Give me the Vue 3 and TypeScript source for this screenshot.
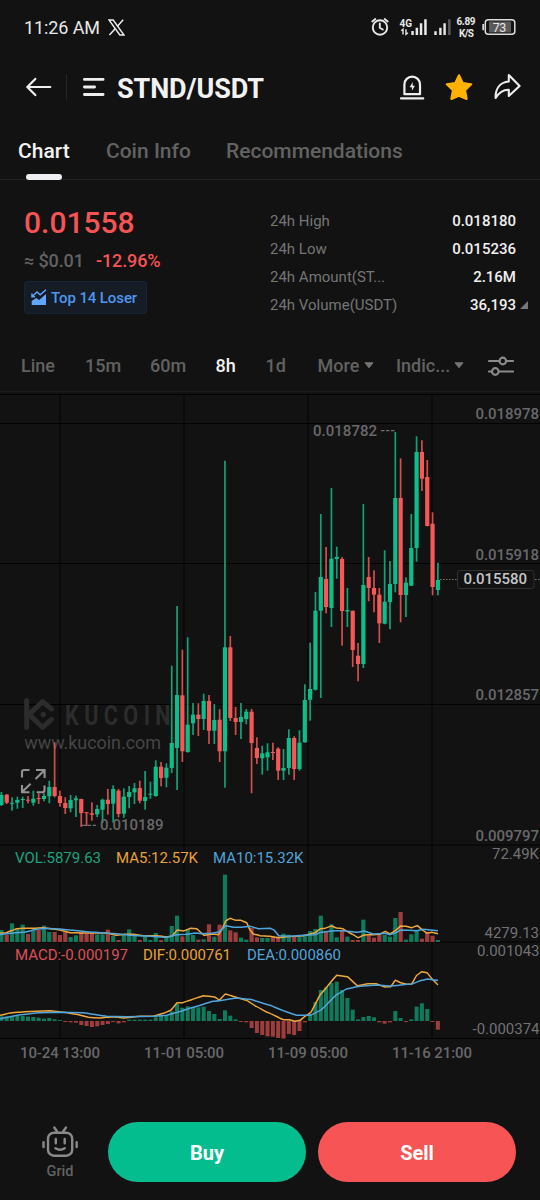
<script setup lang="ts">
type Candle = [high: number, top: number, bottom: number, low: number, up: 0 | 1]

const step = 5.323
const xAt = (i: number): number => 1.4 + i * step

const candles: Candle[] = [
  [792, 795, 805, 806, 1], [794, 794.7, 802.7, 804, 0], [797.3, 802.7, 803.7, 810.7, 1], [796.7, 800, 802.7, 808.7, 1],
  [796.7, 799, 800, 808, 1], [796, 799.7, 800.7, 803.3, 0], [790.7, 798.7, 802.7, 805.7, 1], [793.3, 798, 799, 804, 0],
  [793.3, 796, 799, 801.3, 1], [780.7, 787, 796.3, 803.3, 1], [742.3, 787, 796, 797.3, 0], [790.7, 796, 803, 806.7, 0],
  [797.3, 803, 808, 814, 0], [795, 800, 808.3, 812.3, 1], [795.7, 798.3, 800.3, 817, 1], [798.7, 799, 813, 827, 0],
  [812, 812.3, 813.3, 826, 0], [802.3, 813.3, 814.7, 820.7, 0], [805, 809, 814.3, 817, 1], [798.7, 799.7, 809.7, 823, 1],
  [789, 799.7, 804, 814.7, 0], [785.3, 789, 803.7, 822.7, 1], [789, 790.7, 814, 817.3, 0], [788.3, 796.7, 813.7, 817.7, 1],
  [786, 792, 797, 808.3, 1], [783, 788.3, 792.3, 804, 1], [780.7, 788, 800.7, 803.3, 0], [771, 797, 801, 809.7, 1],
  [781.7, 793.7, 794.7, 798.7, 1], [760.3, 766.7, 796, 796.7, 1], [762, 766.7, 778, 786.3, 0], [763.3, 767.7, 777.7, 787.3, 1],
  [665.7, 743, 768, 773, 1], [606, 695, 748, 790, 1], [649.7, 695.3, 751.3, 762, 0], [637.3, 724.7, 752, 752.7, 1],
  [703, 714.7, 723.3, 735, 1], [703.3, 714.7, 719, 736, 0], [693.7, 701, 719, 730, 1], [695, 701, 730.7, 744, 0],
  [704, 720, 730.7, 744, 1], [709.3, 719.7, 751.3, 762, 0], [460.7, 647.3, 751.3, 787.7, 1], [636, 647.3, 718, 721, 0],
  [707, 718, 722, 735, 0], [703, 717, 722, 739, 1], [709, 711.7, 719, 724.3, 1], [709, 711.7, 743, 793.3, 0],
  [737.3, 748, 758, 764, 0], [745.7, 753.3, 758.3, 774.7, 1], [743.3, 752.3, 757.3, 770.7, 1], [742.7, 752, 753, 760, 0],
  [747.3, 748.7, 770.7, 780, 0], [749, 768, 770.7, 780, 1], [729.3, 738, 768, 774.7, 1], [736.3, 738, 769, 780, 0],
  [730.3, 742.7, 769, 770.7, 1], [684.3, 700, 742.3, 742.7, 1], [642.7, 689, 699.7, 720.7, 1], [592, 610.7, 689.7, 690.5, 1],
  [514, 577, 610.7, 698, 1], [547, 579, 607, 613.3, 0], [488, 558.7, 608, 627, 1], [546.7, 556.9, 559, 578.7, 1],
  [557, 559, 611, 645.7, 0], [588, 610, 611.5, 627, 1], [610.7, 610.7, 650, 667, 0], [643, 655.7, 664, 681.3, 0],
  [504, 585, 664, 668, 1], [557, 577, 588, 601.3, 0], [570.3, 588, 594.7, 612.3, 0], [588, 594.7, 623.3, 643, 0],
  [550.3, 601.7, 623.7, 624.3, 1], [561, 584, 602, 629.3, 1], [432, 498, 584, 592.3, 1], [458.3, 498, 595, 622.3, 0],
  [577.3, 582.7, 595, 617, 1], [514, 548, 585.7, 586, 1], [436.3, 452, 548, 561.7, 1], [440.3, 452, 478.7, 491, 0],
  [460, 477, 526, 526.3, 0], [512.3, 523.7, 587, 595.3, 0], [562.7, 580, 590, 595.3, 1],
]

/* Volume bar heights, in thirds of a pixel */
const volumes: number[] = [
  36, 22, 56, 42, 52, 24, 35, 36, 49, 30, 30, 21, 30, 15, 20, 29, 26, 29, 23, 23, 37, 18, 6, 21, 38, 24, 6, 16, 6, 27, 6,
  15, 48, 79, 17, 37, 21, 7, 8, 53, 16, 52, 202, 35, 29, 13, 7, 42, 14, 12, 12, 15, 16, 25, 22, 17, 17, 20, 33, 39, 79,
  30, 53, 14, 33, 16, 6, 6, 67, 20, 13, 26, 21, 16, 72, 90, 7, 23, 36, 10, 30, 19, 6,
]

/* Histogram values, in thirds of a pixel around the zero line */
const histogram: number[] = [
  14, 14, 15, 15, 15, 13, 12, 10, 7, 9, 5, 3, -3, -4, -5, -12, -15, -18, -16, -12, -9, -3, -7, -4, 4, 4, 4, 4, 4, 11, 15,
  18, 29, 51, 40, 44, 42, 41, 43, 30, 21, 6, 32, 16, 5, -3, -4, -21, -36, -42, -46, -47, -51, -53, -39, -42, -30, -4, 21,
  57, 93, 101, 114, 118, 93, 69, 34, 5, 12, 15, 11, -4, -8, -4, 30, 9, -3, 5, 43, 53, 36, -3, -26,
]

type Point = [number, number]

function smooth(points: Point[]): string {
  let d = `M${points[0][0]} ${points[0][1]}`
  for (let i = 1; i < points.length; i++) {
    const [px, py] = points[i - 1]
    const [x, y] = points[i]
    const s = (x - px) * 0.2
    const r = (y - py) * 0.15
    d += ` C${px + s} ${py + r} ${x - s} ${y - r} ${x} ${y}`
  }
  return d
}

const scale = (left: Point[], right: Point[], y0: number): string =>
  smooth([
    ...left.map(([x, y]): Point => [x / 3, y0 + y / 3]),
    ...right.map(([x, y]): Point => [270 + x / 3, y0 + y / 3]),
  ])

const ma5 = scale(
  [[0, 279], [16, 279], [32, 273], [50, 266], [70, 265], [100, 265], [130, 263], [150, 266], [180, 270], [210, 278], [240, 279], [320, 279], [350, 286], [375, 283], [400, 283], [430, 287], [470, 287], [500, 291], [516, 288], [532, 270], [550, 273], [572, 265], [590, 266], [604, 279], [612, 286], [632, 282], [655, 284], [665, 270], [678, 242], [690, 235], [704, 240], [722, 241], [740, 248], [750, 270], [760, 282], [780, 287]],
  [[0, 289], [25, 293], [50, 290], [100, 287], [135, 278], [152, 266], [165, 265], [184, 258], [200, 264], [218, 266], [232, 275], [248, 283], [264, 293], [282, 285], [310, 284], [328, 283], [346, 274], [360, 282], [376, 272], [392, 258], [408, 259], [425, 263], [442, 257], [460, 272], [470, 279], [485, 277], [504, 281]],
  840,
)
const ma10 = scale(
  [[0, 284], [40, 279], [75, 276], [110, 268], [140, 265], [180, 267], [220, 271], [260, 275], [310, 279], [350, 281], [390, 286], [440, 288], [500, 292], [530, 284], [560, 283], [585, 279], [604, 281], [632, 280], [656, 276], [678, 257], [700, 262], [725, 262], [750, 259], [775, 266]],
  [[0, 265], [12, 270], [26, 287], [60, 289], [100, 286], [135, 284], [152, 277], [184, 273], [220, 272], [260, 277], [282, 273], [310, 282], [345, 280], [360, 284], [376, 279], [392, 270], [440, 272], [460, 268], [504, 272]],
  840,
)
const dif = scale(
  [[0, 226], [30, 219], [75, 215], [110, 214], [150, 212], [190, 217], [230, 223], [265, 232], [300, 234], [340, 230], [370, 234], [420, 229], [460, 228], [490, 220], [512, 211], [532, 188], [548, 188], [575, 179], [610, 167], [644, 171], [658, 180], [676, 162], [712, 173], [740, 181], [770, 200], [800, 216]],
  [[0, 220], [40, 239], [58, 239], [75, 244], [90, 241], [105, 229], [122, 218], [152, 162], [200, 106], [232, 110], [262, 137], [295, 131], [318, 131], [345, 141], [362, 140], [376, 121], [392, 128], [410, 133], [425, 132], [440, 106], [456, 95], [472, 99], [488, 119], [504, 135]],
  940,
)
const dea = scale(
  [[0, 236], [60, 224], [120, 218], [180, 217], [250, 218], [320, 229], [380, 230], [460, 229], [500, 226], [532, 217], [580, 202], [640, 184], [712, 174], [750, 178]],
  [[0, 196], [40, 212], [80, 226], [120, 226], [152, 211], [200, 164], [232, 146], [262, 140], [320, 135], [360, 138], [425, 132], [456, 121], [472, 117], [504, 121]],
  940,
)

const verticals = [60, 184, 308, 432]
const horizontals = [394.5, 423.5, 563.5, 704.5, 845, 942, 1038.5]
const priceTicks = [
  { y: 419, text: '0.018978' },
  { y: 559.5, text: '0.015918' },
  { y: 700, text: '0.012857' },
  { y: 840.5, text: '0.009797' },
]
const dates = [
  { x: 20, text: '10-24 13:00' },
  { x: 144, text: '11-01 05:00' },
  { x: 268, text: '11-09 05:00' },
  { x: 392, text: '11-16 21:00' },
]
const stats = [
  { label: '24h High', value: '0.018180' },
  { label: '24h Low', value: '0.015236' },
  { label: '24h Amount(ST...', value: '2.16M' },
  { label: '24h Volume(USDT)', value: '36,193' },
]
</script>

<template>
  <div class="screen">
    <div class="status">
      <span class="clock">11:26 AM</span>
      <svg class="x-logo" width="17" height="17" viewBox="0 0 17 17">
        <path d="M1 1h4.2L16 16h-4.2z" fill="none" stroke="#eee" stroke-width="1.4" />
        <path d="M15.2.8 9.4 7.3M7.4 9.6 1.4 16" stroke="#eee" stroke-width="1.5" />
      </svg>
      <svg class="indicators" width="150" height="28" viewBox="368 14 150 28">
        <g fill="none" stroke="#e8e8e8" stroke-width="1.9" stroke-linecap="round">
          <circle cx="380" cy="27.5" r="7.2" />
          <path d="M379.8 23.4v4.3l3 1.8M375.3 19l-3 2.4M384.7 19l3 2.4" />
        </g>
        <text class="net" x="399.5" y="26.6" textLength="12.5">4G</text>
        <path d="M403 34.5v-5.3l-1.8 1.5M406 29.3v5l2-1.5" fill="none" stroke="#e8e8e8" stroke-width="1.4" />
        <path d="M411.3 31h2.5v4h-2.5zM415.6 27.7h2.5V35h-2.5zM419.8 23.3h2.5V35h-2.5zM424.2 19.3h2.5V35h-2.5zM434.3 31.3h2.4V35h-2.4zM439.2 27.7h2.4V35h-2.4zM443.4 23.3h2.4V35h-2.4z" fill="#e8e8e8" />
        <path d="M448 19.3h2.7V35H448z" fill="#555" />
        <text class="net" x="456.5" y="25.4" textLength="19">6.89</text>
        <text class="net" x="459" y="36.8" textLength="15">K/S</text>
        <path d="M489 21.5h22v11h-22z" fill="#5a5a5a" />
        <rect x="485.3" y="19.8" width="29.5" height="14.4" rx="3" fill="none" stroke="#ddd" stroke-width="1.5" />
        <path d="M483.2 24v6.2" stroke="#ddd" stroke-width="1.7" />
        <text class="battery" x="492.7" y="31.5" textLength="13.5">73</text>
      </svg>
    </div>

    <header class="header">
      <svg width="26" height="20" viewBox="0 0 26 20" class="back">
        <path d="M9.3 1.9 1.3 10l8 8.1M1.6 10h22.7" />
      </svg>
      <i class="divider"></i>
      <svg width="22" height="20" viewBox="0 0 22 20" class="menu">
        <path d="M1.4 2.4h18.7M1.4 10h10.2M1.4 17.5h18.7" />
      </svg>
      <h1>STND/USDT</h1>
      <div class="actions">
        <svg width="26" height="28" viewBox="398 73 26 28" class="bell">
          <path d="M403.4 94.2V84.4a7.8 7.8 0 0 1 15.6 0v9.8zM400 98.4h22.2" />
          <path d="m411.7 82.1-3 5.1h2.2v3.6l3-5.1h-2.2z" class="bolt" />
        </svg>
        <svg width="28" height="28" viewBox="445 73 28 28">
          <path d="m459 75.3 3.7 7.9 8.5 1.1-6.2 6 1.6 8.6-7.6-3.2-7.6 3.2 1.6-8.6-6.2-6 8.5-1.1z" fill="#ffb200" stroke="#ffb200" stroke-width="2.2" stroke-linejoin="round" />
        </svg>
        <svg width="30" height="28" viewBox="493 73 30 28">
          <path d="M508.8 75 519.6 86 508.8 96v-6.3c-5.8-.2-9.5 2.3-13.2 8.2-.3-9.3 4.3-15.5 13.2-16.4z" fill="none" stroke="#eee" stroke-width="2.1" stroke-linejoin="round" />
        </svg>
      </div>
    </header>

    <nav class="tabs">
      <span class="tab active">Chart</span>
      <span class="tab info">Coin Info</span>
      <span class="tab rec">Recommendations</span>
    </nav>

    <section class="summary">
      <div class="quote">
        <div class="price">0.01558</div>
        <div class="change"><span>≈ $0.01</span><b>-12.96%</b></div>
        <div class="badge">
          <svg width="16" height="17" viewBox="0 0 16 17">
            <path d="M.7 16V12l4.5-3 3 2L15 5v11z" fill="#62a5fa" />
            <path d="M1 4.5v3.2h3M1 7.7 6 3l3.2 2.8L15 .8" fill="none" stroke="#62a5fa" stroke-width="1.5" />
          </svg>
          <span>Top 14 Loser</span>
        </div>
      </div>
      <dl class="stats">
        <div v-for="s in stats" :key="s.label">
          <dt>{{ s.label }}</dt>
          <dd>{{ s.value }}</dd>
        </div>
      </dl>
      <svg class="corner" width="8" height="8" viewBox="0 0 8 8"><path d="M8 0v8H0z" fill="#777" /></svg>
    </section>

    <div class="toolbar">
      <span>Line</span><span>15m</span><span>60m</span><span class="on">8h</span><span>1d</span>
      <span class="more">More<svg width="10" height="7" viewBox="0 0 10 7"><path d="M1 .8h8L5 5.8z" /></svg></span>
      <span class="indic">Indic...<svg width="10" height="7" viewBox="0 0 10 7"><path d="M1 .8h8L5 5.8z" /></svg></span>
      <svg class="sliders" width="26" height="20" viewBox="0 0 26 20">
        <path d="M1 5h10.3M18.4 5H25M1 15.5h2.8M11 15.5h14" />
        <circle cx="14.8" cy="5" r="3.3" /><circle cx="7.3" cy="15.5" r="3.3" />
      </svg>
    </div>

    <svg class="chart" width="540" height="680" viewBox="0 392 540 680">
      <g class="grid">
        <path v-for="x in verticals" :key="x" :d="`M${x} 394V1038`" />
        <path v-for="y in horizontals" :key="y" :d="`M0 ${y}H540`" />
      </g>

      <g class="watermark">
        <path d="M26.7 700.5v27M29 714.4l13.6-12.8 9 7.4M29 714.4l13.6 12.9 9-7.9" />
        <circle cx="43.3" cy="714.5" r="2.7" />
        <text transform="translate(65 724.6) scale(0.8 1)" textLength="132" class="brand">KUCOIN</text>
        <text x="24.3" y="749.3" textLength="136.7" class="site">www.kucoin.com</text>
      </g>

      <g class="expand">
        <path d="M22 777.5V772q0-2 2-2h5.5M22 785v7.3h7.5M44.5 785.5V790q0 2.3-2.3 2.3h-5.5M36 770h8.6v8M44.2 770.5 35.5 779M22.4 791.8l8.2-8" />
      </g>

      <g v-for="(c, i) in candles" :key="i" :class="c[4] ? 'up' : 'down'">
        <rect :x="xAt(i) - 0.85" :y="c[0]" width="1.7" :height="c[3] - c[0]" class="wick" />
        <rect :x="xAt(i) - 2.1" :y="c[1]" width="4.2" :height="c[2] - c[1]" />
        <rect class="soft" :x="xAt(i) - 2.1" :y="942 - volumes[i] / 3" width="4.2" :height="volumes[i] / 3" />
      </g>
      <rect
        v-for="(h, i) in histogram"
        :key="`h${i}`"
        :class="h > 0 ? 'soft up' : 'soft down'"
        :x="xAt(i) - 2"
        :y="1021 - Math.max(h, 0) / 3"
        width="4"
        :height="Math.abs(h) / 3"
      />

      <g class="lines">
        <path :d="ma5" class="amber" /><path :d="ma10" class="blue" />
        <path :d="dif" class="amber" /><path :d="dea" class="blue" />
      </g>

      <path d="M381 430.7h3.5m1.5 0h3.5m1.5 0h3.5M82 825.3h4m1.5 0h3.5m1.5 0h3.5" stroke="#85858a" />
      <path d="M440 579.5h18M535 579.5h5" stroke="#777" stroke-dasharray="1.5 1.5" />
      <text x="313" y="435.7" textLength="64">0.018782</text>
      <text x="100" y="830" textLength="63.5">0.010189</text>
      <rect x="457.5" y="570.5" width="76.5" height="18" rx="2.5" fill="#121212" stroke="#303030" />
      <text x="463.5" y="584.3" textLength="63.5" class="last">0.015580</text>

      <text v-for="t in priceTicks" :key="t.text" x="475.5" :y="t.y" textLength="63.5">{{ t.text }}</text>
      <g class="light">
        <text x="492" y="858.6" textLength="47">72.49K</text>
        <text x="484.5" y="937.5" textLength="54.5">4279.13</text>
        <text x="477" y="955.6" textLength="62.5">0.001043</text>
        <text x="472.5" y="1034" textLength="67">-0.000374</text>
      </g>
      <g class="legend">
        <text x="15" y="863" textLength="86" class="g">VOL:5879.63</text>
        <text x="116" y="863" textLength="82" class="a">MA5:12.57K</text>
        <text x="213" y="863" textLength="90.5" class="b">MA10:15.32K</text>
        <text x="15" y="960" textLength="113" class="r">MACD:-0.000197</text>
        <text x="143" y="960" textLength="88" class="a">DIF:0.000761</text>
        <text x="247" y="960" textLength="94" class="b">DEA:0.000860</text>
      </g>
      <text v-for="d in dates" :key="d.text" :x="d.x" y="1057.5" textLength="80">{{ d.text }}</text>
    </svg>

    <footer class="footer">
      <div class="bot">
        <svg width="38" height="32" viewBox="0 0 38 32">
          <rect x="7" y="6.7" width="24.2" height="23" rx="6" />
          <path d="M13.3 1.5l2.8 4M25 1.5l-2.8 4M14.8 13v4.3M23.7 13v4.3M14.5 22.2q4.6 3 9.2 0" />
          <path d="M2.5 16.2v4.8M35.7 16.2v4.8" />
        </svg>
        <span>Grid</span>
      </div>
      <button class="buy">Buy</button>
      <button class="sell">Sell</button>
    </footer>
  </div>
</template>

<style>
body {
  background: #121212;
}
</style>

<style scoped>
.screen {
  width: 540px;
  height: 1200px;
  overflow: hidden;
  background: #121212;
  color: #757575;
  font-family: Roboto, sans-serif;
  display: flex;
  flex-direction: column;
}
.screen svg {
  display: block;
  flex: none;
}
.status {
  height: 55px;
  display: flex;
  align-items: center;
  padding: 0 22px 0 24px;
  color: #e8e8e8;
}
.clock {
  font-size: 18px;
  letter-spacing: -0.1px;
  width: 84px;
  white-space: nowrap;
}
.indicators {
  margin-left: auto;
}
.net {
  font-size: 10px;
  font-weight: 700;
  fill: #e8e8e8;
}
.battery {
  font-size: 12.5px;
  fill: #e8e8e8;
}
.header {
  height: 64px;
  margin-bottom: 1px;
  display: flex;
  align-items: center;
  padding: 0 17px 0 26px;
}
.back,
.menu,
.bell {
  fill: none;
  stroke: #eee;
  stroke-width: 2.2;
  stroke-linecap: round;
  stroke-linejoin: round;
}
.menu {
  stroke-width: 2.8;
}
.bell .bolt {
  fill: #eee;
  stroke: none;
}
.divider {
  width: 1px;
  height: 26px;
  background: #242424;
  margin: 0 16px 0 14px;
}
h1 {
  margin: 3px 0 0 12px;
  color: #f2f2f2;
  font-size: 27px;
  font-weight: 700;
  letter-spacing: -0.1px;
}
.actions {
  margin-left: auto;
  display: flex;
  gap: 20px;
  align-items: center;
}
.tabs {
  height: 59px;
  border-bottom: 1px solid #222;
  padding-left: 18px;
  display: flex;
  font-size: 21px;
  font-weight: 500;
  line-height: 62px;
  color: #626262;
}
.tab.active {
  color: #f2f2f2;
  position: relative;
  width: 88px;
}
.tab.active::after {
  content: '';
  position: absolute;
  left: 8px;
  bottom: -1px;
  width: 36px;
  height: 6px;
  border-radius: 3px;
  background: #f0f0f4;
}
.tab.info {
  width: 120px;
}
.summary {
  height: 160px;
  display: flex;
  padding-left: 24px;
}
.quote {
  width: 246px;
}
.price {
  margin-top: 24px;
  font-size: 30px;
  line-height: 38px;
  font-weight: 500;
  color: #f65454;
}
.change {
  margin-top: 8px;
  display: flex;
  font-size: 18px;
  line-height: 22px;
  font-weight: 500;
  letter-spacing: -0.12px;
  color: #626262;
}
.change span {
  width: 72px;
}
.change b {
  font-weight: 500;
  color: #f65454;
}
.badge {
  margin-top: 9px;
  width: 121px;
  height: 31px;
  border: 1px solid #182434;
  border-radius: 3px;
  background: #151c26;
  display: flex;
  align-items: center;
  padding-left: 0;
  color: #4e96ef;
  font-size: 15px;
  font-weight: 500;
  letter-spacing: -0.1px;
}
.badge svg {
  margin: 0 4px 0 6px;
}
.stats {
  width: 246px;
  margin: 27px 0 0;
  font-size: 15px;
}
.stats div {
  height: 28px;
  line-height: 28px;
  display: flex;
  justify-content: space-between;
}
.stats dd {
  margin: 0;
  color: #f0f0f0;
  font-weight: 500;
}
.corner {
  margin: 121px 0 0 4px;
}
.toolbar {
  height: 51px;
  border-bottom: 1px solid #1c1c1c;
  padding-left: 21px;
  display: grid;
  grid-template-columns: 64px 65px 65.5px 50px 52px 78.5px 92px 26px;
  align-items: center;
  font-size: 18px;
  font-weight: 500;
  line-height: 22px;
  padding-top: 1px;
  box-sizing: border-box;
  height: 52px;
  color: #626262;
}
.toolbar .on {
  color: #f2f2f2;
}
.toolbar .more,
.toolbar .indic {
  display: flex;
  align-items: center;
}
.more svg,
.indic svg {
  margin-left: 5px;
  margin-bottom: 1px;
  fill: #757575;
  stroke: #757575;
  stroke-linejoin: round;
}
.indic svg {
  margin-left: 4px;
}
.sliders {
  fill: none;
  stroke: #8a8a8a;
  stroke-width: 2.2;
  stroke-linecap: round;
}
.chart text {
  font-size: 15px;
  font-weight: 500;
  fill: #68686b;
}
.chart .light text {
  font-weight: 400;
  fill: #717174;
}
.chart text.last {
  fill: #c6c6c8;
}
.grid {
  stroke: #020202;
  stroke-width: 1;
}
.watermark {
  fill: #2c2c2c;
}
.watermark path {
  fill: none;
  stroke: #2c2c2c;
  stroke-width: 5;
  stroke-linecap: round;
  stroke-linejoin: round;
}
.chart .brand {
  font-size: 27px;
  font-weight: 700;
  fill: #2c2c2c;
}
.chart .site {
  font-size: 18px;
  font-weight: 400;
  fill: #454545;
}
.expand {
  fill: none;
  stroke: #929292;
  stroke-width: 2.1;
}
.up {
  fill: #0dbd8b;
}
.down {
  fill: #f65858;
}
.wick {
  opacity: 0.85;
}
.soft {
  opacity: 0.62;
}
.lines {
  fill: none;
  stroke-width: 1.5;
}
.amber {
  stroke: #f0a83c;
}
.blue {
  stroke: #4fa5dc;
}
.chart .legend text {
  font-weight: 400;
}
.chart .legend .g {
  fill: #1ba27c;
}
.chart .legend .a {
  fill: #e9a13b;
}
.chart .legend .b {
  fill: #4fa5dc;
}
.chart .legend .r {
  fill: #dd5058;
}
.footer {
  display: flex;
  align-items: center;
  padding: 50px 24px 0 41px;
  height: 60px;
}
.bot {
  width: 38px;
  margin-right: 29px;
  padding-top: 2px;
  display: flex;
  flex-direction: column;
  align-items: center;
  font-size: 14.5px;
  font-weight: 500;
  line-height: 18px;
  color: #626262;
}
.bot svg {
  margin-bottom: 5px;
  fill: none;
  stroke: #8a8a8a;
  stroke-width: 2.4;
  stroke-linecap: round;
}
button {
  width: 198px;
  height: 60px;
  padding: 1px 0 0;
  border: 0;
  border-radius: 30px;
  color: #fff;
  font: 700 20px Roboto, sans-serif;
}
.buy {
  background: #04bd8f;
  margin-right: 12px;
}
.sell {
  background: #f75555;
}
</style>
